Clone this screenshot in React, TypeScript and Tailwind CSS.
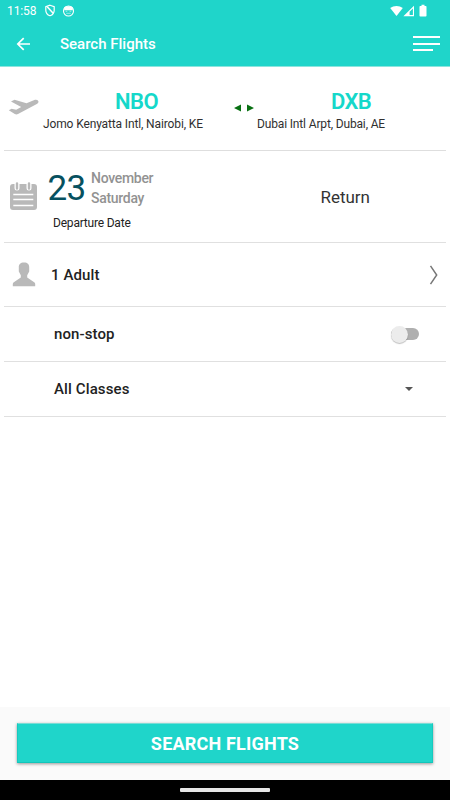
import React from "react";

function StatusBar() {
  return (
    <div className="flex h-[21px] items-center pl-[7px] pr-[22px] text-white">
      <span className="w-[37px] text-[12px] leading-[20px] tracking-[-0.1px]">11:58</span>
      <svg className="h-[13px] w-[12px]" viewBox="0 0 12 13" fill="none" stroke="#fff" strokeWidth="1.2">
        <path d="M6 1.2 10.2 2.7V6.2C10.2 8.9 8.4 10.9 6 11.8 3.6 10.9 1.8 8.9 1.8 6.2V2.7Z" />
        <path d="M3.2 2.7 9.2 9.3" strokeWidth="1.5" />
      </svg>
      <svg className="ml-[6px] h-[12px] w-[13px]" viewBox="0 0 13 12">
        <circle cx="6.5" cy="6" r="5" fill="none" stroke="#fff" strokeWidth="1.1" />
        <path d="M2.2 5.2V2.6L4 1.3h5l1.8 1.3v2.6Z" fill="#fff" />
        <path d="M3.6 6.3h1.7M7.6 6.3h1.7M4.3 8.3h4.4" stroke="#fff" strokeWidth=".8" opacity=".7" />
      </svg>
      <div className="mr-[1px] ml-auto flex items-center">
        <svg className="h-[12px] w-[13px]" viewBox="0 0 13 12">
          <path d="M.2 3.1C3.7.2 9.3.2 12.8 3.1L6.5 11Z" fill="#fff" />
        </svg>
        <svg className="ml-[0.5px] h-[12px] w-[12px]" viewBox="0 0 12 12">
          <path d="M.4 11.2 11 .8v10.4ZM6.6 10H9.9V3.5L6.6 6.8Z" fill="#fff" fillRule="evenodd" />
        </svg>
        <svg className="ml-[4px] h-[13px] w-[8px]" viewBox="0 0 8 13">
          <path d="M2.5.8h3V2h1.2q.8 0 .8.8v9q0 .8-.8.8H1.3q-.8 0-.8-.8v-9Q.5 2 1.3 2h1.2Z" fill="#fff" />
        </svg>
      </div>
    </div>
  );
}

function Header() {
  return (
    <header className="h-[67px] shrink-0 border-b border-[#8ce5de] bg-[#1fd5ca]">
      <StatusBar />
      <div className="flex h-[45px] items-center pl-[16px] pr-[10px] text-white">
        <svg className="h-[14px] w-[15px]" viewBox="0 0 15 14" fill="none" stroke="#fff" strokeWidth="1.7">
          <path d="M14 7H2M7.7 1.1 1.8 7l5.9 5.9" />
        </svg>
        <span className="ml-[29px] text-[15px] font-medium leading-[20px]">Search Flights</span>
        <div className="ml-auto flex w-[27px] flex-col gap-[4.5px]">
          <i className="h-[2px] w-full bg-white" />
          <i className="h-[2px] w-full bg-white" />
          <i className="h-[2px] w-[20px] bg-white" />
        </div>
      </div>
    </header>
  );
}

function Route() {
  return (
    <section className="mx-[4px] flex h-[84px] border-b border-[#dedede]">
      <svg className="ml-[4px] mt-[32px] h-[18px] w-[32px] shrink-0" viewBox="0 0 32 18">
        <path
          d="M3 2.6 6.5.8 18.5 4.3 27 .8Q30 .2 30.5 2.4 30.6 4 28.8 5L10 15.1Q8.5 15.8 6.8 15.1L.8 11.3 3.6 9.8 8.2 10.7 13.2 8.1Z"
          fill="#b9b9b9"
        />
      </svg>
      <div className="ml-[-1px] w-[190px] pt-[21px]">
        <div className="pl-[5px] text-center text-[22px] font-semibold leading-[28px] tracking-[-0.6px] text-[#15d8ca]">
          NBO
        </div>
        <div className="ml-[4px] whitespace-nowrap text-[12px] leading-[16px] tracking-[-0.13px] text-[#303030]">
          Jomo Kenyatta Intl, Nairobi, KE
        </div>
      </div>
      <svg className="ml-[5px] mt-[37px] h-[8px] w-[21px] shrink-0" viewBox="0 0 21 8" fill="#087012">
        <path d="M0 4 7 .4v7.2ZM20 4 13 .4v7.2Z" />
      </svg>
      <div className="ml-[2px] pt-[21px]">
        <div className="ml-[74px] text-[22px] font-semibold leading-[28px] tracking-[-0.6px] text-[#15d8ca]">DXB</div>
        <div className="whitespace-nowrap text-[12px] leading-[16px] tracking-[-0.15px] text-[#303030]">
          Dubai Intl Arpt, Dubai, AE
        </div>
      </div>
    </section>
  );
}

function Dates() {
  return (
    <section className="mx-[4px] flex h-[92px] border-b border-[#e0e0e0]">
      <svg className="ml-[5px] mt-[30px] h-[30px] w-[29px] shrink-0" viewBox="0 0 29 30">
        <rect x="1" y="3" width="27" height="26" rx="3" fill="#b9b9b9" />
        <path d="M4.3 13.5h20M4.3 18.5h20M4.3 24.5h20" stroke="#fff" strokeWidth="1.3" />
        <path d="M8 3v4M20 3v4" stroke="#fff" strokeWidth="5" strokeLinecap="round" />
        <path d="M8 2.5v5M20 2.5v5" stroke="#b9b9b9" strokeWidth="2.4" strokeLinecap="round" />
      </svg>
      <div className="ml-[9px]">
        <div className="flex h-[60px] pt-[17px]">
          <span className="w-[44px] pl-[0.5px] text-[35px] leading-[41px] tracking-[-0.7px] text-[#07515f]">23</span>
          <div className="pt-[1px] text-[14px] font-medium leading-[19.5px] tracking-[-0.3px] text-[#929292]">
            <div>November</div>
            <div>Saturday</div>
          </div>
        </div>
        <div className="ml-[6px] mt-[4px] text-[12px] leading-[16px] tracking-[-0.2px] text-[#222]">Departure Date</div>
      </div>
      <div className="ml-auto mr-[76px] mt-[35px] text-[17px] leading-[22px] text-[#333]">Return</div>
    </section>
  );
}

export default function App() {
  return (
    <main className="flex h-[800px] w-[450px] flex-col overflow-hidden bg-white font-['Roboto',sans-serif]">
      <Header />
      <Route />
      <Dates />
      <section className="mx-[4px] flex h-[64px] items-center border-b border-[#e0e0e0] text-[#222]">
        <svg className="ml-[8px] h-[25px] w-[24px]" viewBox="0 0 24 25">
          <path
            d="M12 .5C15.7.5 17.3 2.5 17.2 5.5V9.5L15.2 13.2V15.5L22.2 20.2Q23.2 20.9 23.2 22V24.3H.8V22Q.8 20.9 1.8 20.2L8.8 15.5V13.2L6.8 9.5V5.5C6.7 2.5 8.3.5 12 .5Z"
            fill="#b9b9b9"
          />
        </svg>
        <span className="ml-[15px] text-[15px] font-medium leading-[20px] tracking-[0.1px]">1 Adult</span>
        <svg className="ml-auto mr-[7px] h-[20px] w-[10px]" viewBox="0 0 10 20">
          <path d="M1.5.8 7.7 10 1.5 19.2" stroke="#777" strokeWidth="1.5" fill="none" />
        </svg>
      </section>
      <section className="mx-[4px] flex h-[55px] items-center border-b border-[#e0e0e0] pl-[50px] text-[#222]">
        <span className="text-[15px] font-medium leading-[20px] tracking-[0.1px]">non-stop</span>
        <div className="ml-auto mr-[27px] flex h-[12px] w-[28px] items-center rounded-full bg-[#afafaf]">
          <div className="h-[17px] w-[17px] shrink-0 rounded-full bg-[#ececec] shadow-[0_1px_1px_rgba(0,0,0,0.25)]" />
        </div>
      </section>
      <section className="mx-[4px] flex h-[55px] items-center border-b border-[#e0e0e0] pl-[50px] text-[#222]">
        <span className="text-[15px] font-medium leading-[20px] tracking-[0.12px]">All Classes</span>
        <svg className="ml-auto mr-[33px] h-[4px] w-[8px]" viewBox="0 0 8 4">
          <path d="M0 0h8L4 4Z" fill="#555" />
        </svg>
      </section>
      <footer className="mt-auto h-[73px] shrink-0 bg-[#fafafa] px-[17px] pt-[16px]">
        <button className="block h-[40px] w-full border border-t-[#79dcd5] border-b-[#12c5ba] border-l-[#16cabf] border-r-[#16cabf] bg-[#1fd5ca] text-center text-[18px] font-bold leading-[39px] tracking-[0.2px] text-white shadow-[0_1px_3px_rgba(0,0,0,0.4)]">
          SEARCH FLIGHTS
        </button>
      </footer>
      <div className="flex h-[20px] shrink-0 items-center justify-center bg-black">
        <div className="h-[4px] w-[90px] rounded-[1px] bg-[#e5e5e5]" />
      </div>
    </main>
  );
}
